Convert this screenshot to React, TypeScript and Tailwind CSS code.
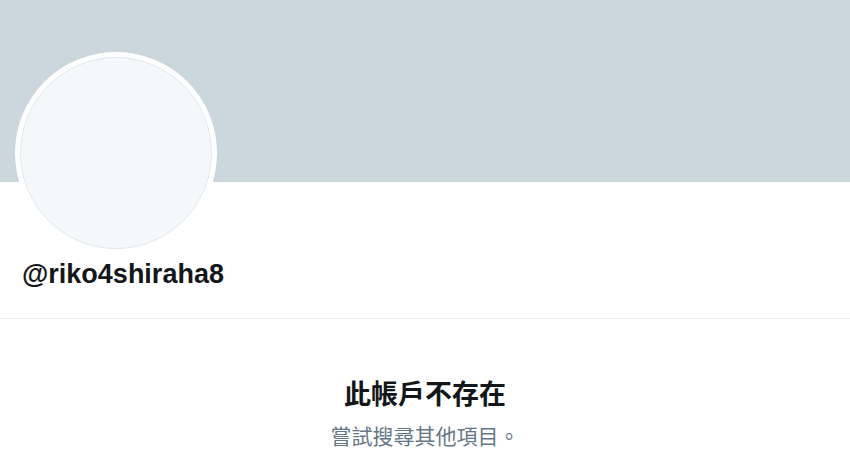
export default function App() {
  return (
    <div className="w-[850px] h-[450px] overflow-hidden bg-white font-['Liberation_Sans','Noto_Sans_CJK_TC',sans-serif]">
      <div className="h-[182px] bg-[#ccd6dd]" />
      <div className="px-[15px]">
        <div className="-mt-[130px] w-[202px] h-[202px] rounded-full bg-white p-[5px]">
          <div className="w-full h-full rounded-full bg-[#f5f8fa] border border-[#e1e8ed]" />
        </div>
        <div className="pl-[7px] mt-[4px] text-[27px] leading-[32px] font-bold text-[#14171a]">
          @riko4shiraha8
        </div>
      </div>
      <div className="mt-[28px] border-t border-[#e6ecf0]" />
      <div className="flex flex-col items-center pt-[60px]">
        <div className="text-[27px] leading-[32px] font-bold text-[#14171a]">此帳戶不存在</div>
        <div className="mt-[14px] text-[21px] leading-[24px] text-[#657786]">嘗試搜尋其他項目。</div>
      </div>
    </div>
  );
}
